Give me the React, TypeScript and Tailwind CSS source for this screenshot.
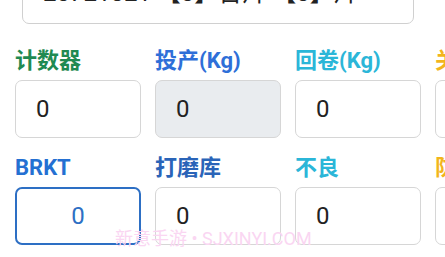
import React from 'react';

interface Field {
  label: string;
  color: string;
  value: string;
  disabled?: boolean;
  focused?: boolean;
}

const rows: Field[][] = [
  [
    { label: '计数器', color: 'text-[#1f8a52]', value: '0' },
    { label: '投产(Kg)', color: 'text-[#2e6fd8]', value: '0', disabled: true },
    { label: '回卷(Kg)', color: 'text-[#2bb6d8]', value: '0' },
    { label: '关', color: 'text-[#f2b51c]', value: '' },
  ],
  [
    { label: 'BRKT', color: 'text-[#2470d2]', value: '0', focused: true },
    { label: '打磨库', color: 'text-[#2a64b8]', value: '0' },
    { label: '不良', color: 'text-[#2bb6d8]', value: '0' },
    { label: '防', color: 'text-[#f2b51c]', value: '' },
  ],
];

const FieldBox: React.FC<{ f: Field }> = ({ f }) => {
  let box = 'border-[1.5px] border-[#d6d6d6] bg-white text-[#222]';
  if (f.disabled) box = 'border-[1.5px] border-[#d6d6d6] bg-[#e9ecef] text-[#222]';
  if (f.focused) box = 'border-2 border-[#2d6fc4] bg-white text-[#2d6fc4] justify-center';
  return (
    <div className="flex flex-col">
      <div className={`h-[30px] flex items-center text-[22px] font-bold leading-none ${f.color}`}>{f.label}</div>
      <div className={`mt-[4px] h-[58px] rounded-[7px] flex items-center px-[20px] text-[24px] ${box}`}>
        {f.value}
      </div>
    </div>
  );
};

export default function App() {
  return (
    <div className="relative w-[445px] h-[257px] overflow-hidden bg-white" style={{ fontFamily: 'Roboto, "Noto Sans CJK SC", sans-serif' }}>
      <div className="h-[24px] overflow-hidden flex items-end pl-[22px]">
        <div className="w-[392px] h-[50px] shrink-0 rounded-b-[7px] border-[1.5px] border-[#d0d0d0] flex items-end pl-[20px] pb-[18px] text-[24px] leading-[24px] text-[#222]">
          <span>20721821 【0】台片 【0】片</span>
          <span className="ml-auto mr-[26px] text-[14px]">▼</span>
        </div>
      </div>
      <div className="px-[15px] pt-[22px] flex flex-col gap-[15px]">
        {rows.map((r, i) => (
          <div key={i} className="grid grid-cols-[126px_126px_126px_126px] gap-[14px]">
            {r.map((f) => (
              <FieldBox key={f.label} f={f} />
            ))}
          </div>
        ))}
      </div>
      <div className="absolute left-[115px] top-[225px] text-[18px] text-[#fad6f2] whitespace-nowrap">新意手游 • SJXINYI.COM</div>
    </div>
  );
}
